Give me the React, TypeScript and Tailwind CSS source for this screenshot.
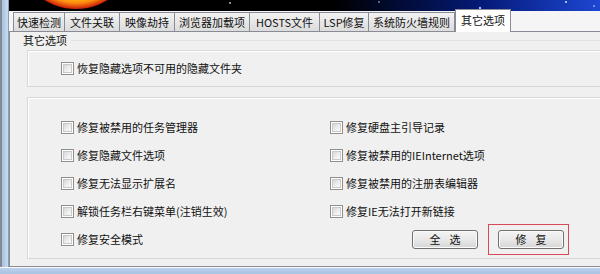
import React from "react";

const tabs: [string, number][] = [
  ["快速检测", 52],
  ["文件关联", 56],
  ["映像劫持", 56],
  ["浏览器加载项", 76],
  ["HOSTS文件", 71],
  ["LSP修复", 50],
  ["系统防火墙规则", 87],
];

function Check() {
  return (
    <span className="flex h-[13px] w-[13px] shrink-0 border border-[#8f8f8f] bg-white p-[1px]">
      <span className="flex-1 border border-[#c9c9c9] bg-gradient-to-br from-[#d6d6d6] via-[#ececec] to-[#fbfbfb]" />
    </span>
  );
}

function Item({ label }: { label: string }) {
  return (
    <div className="flex h-[28px] items-center gap-[3px]">
      <Check />
      <span className="whitespace-nowrap leading-none">{label}</span>
    </div>
  );
}

function Btn({ a, b }: { a: string; b: string }) {
  return (
    <div className="flex h-[19px] w-[66px] items-center justify-center gap-[9px] rounded-[3px] border border-[#707070] bg-gradient-to-b from-[#f4f4f4] via-[#e8e8e8] to-[#d6d6d6] leading-none shadow-[inset_0_0_0_1px_#fbfbfb]">
      <span>{a}</span>
      <span>{b}</span>
    </div>
  );
}

export default function App() {
  return (
    <div className="flex h-[274px] w-[600px] flex-col overflow-hidden bg-[#f0f0f0] font-['Noto_Sans_CJK_SC',sans-serif] text-[11px] text-[#111]">
      <div className="flex h-[267px]">
        {/* window frame left */}
        <div className="flex w-[9px] shrink-0">
          <div className="w-[2px] bg-[#838a95]" />
          <div className="w-[6px] bg-gradient-to-r from-[#a7c1e0] to-[#c8daee]" />
          <div className="w-px bg-[#8a9cb4]" />
        </div>
        <div className="flex min-w-0 flex-1 flex-col">
          {/* banner */}
          <div className="relative h-[11px] shrink-0 overflow-hidden bg-black">
            <svg className="absolute inset-0" width="591" height="11" viewBox="0 0 591 11">
              <defs>
                <radialGradient id="sun" cx="67" cy="-51" r="60" gradientUnits="userSpaceOnUse">
                  <stop offset="0" stopColor="#fffbd0" />
                  <stop offset="0.78" stopColor="#ffd21a" />
                  <stop offset="0.9" stopColor="#ff8a10" />
                  <stop offset="1" stopColor="#c81e08" />
                </radialGradient>
                <linearGradient id="sky" x1="0" y1="0" x2="1" y2="0">
                  <stop offset="0" stopColor="#000000" />
                  <stop offset="0.55" stopColor="#000000" />
                  <stop offset="0.8" stopColor="#041a78" />
                  <stop offset="1" stopColor="#1d46d2" />
                </linearGradient>
              </defs>
              <rect x="0" y="0" width="591" height="11" fill="url(#sky)" />
              <circle cx="67" cy="-51" r="60" fill="url(#sun)" />
              <circle cx="221" cy="3" r="1" fill="#bbbbbb" />
              <circle cx="370" cy="2" r="0.8" fill="#cccccc" />
              <circle cx="471" cy="8" r="1.2" fill="#9fb8ff" />
              <circle cx="557" cy="2" r="1" fill="#dde6ff" />
              <circle cx="585" cy="6" r="0.8" fill="#dde6ff" />
            </svg>
          </div>
          {/* tab strip */}
          <div className="relative z-10 flex h-[20px] shrink-0 items-end bg-[#f5f5f5] pl-[4px]">
            {tabs.map(([t, w]) => (
              <div
                key={t}
                style={{ width: w }}
                className="-mr-px flex h-[19px] items-center justify-center whitespace-nowrap border border-b-0 border-[#898c95] bg-gradient-to-b from-[#f2f2f2] to-[#dcdcdc] leading-none"
              >
                {t}
              </div>
            ))}
            <div className="-mb-px ml-px flex h-[23px] w-[56px] items-center justify-center whitespace-nowrap border border-b-0 border-[#898c95] bg-white pb-[2px] leading-none">
              其它选项
            </div>
          </div>
          {/* panel */}
          <div className="flex h-[236px] flex-col overflow-hidden border-b border-l border-t border-[#898c95] bg-[#f0f0f0] pl-[13px] pt-[1px]">
            <div className="flex h-[14px] items-center gap-[4px]">
              <span className="whitespace-nowrap leading-none">其它选项</span>
              <div className="h-px flex-1 bg-[#e2e2e2]" />
            </div>
            <div className="ml-[4px] mt-[3px] flex h-[37px] w-[600px] shrink-0 items-center border border-[#d5d9dd] pl-[33px] shadow-[inset_1px_1px_0_#ffffff]">
              <Item label="恢复隐藏选项不可用的隐藏文件夹" />
            </div>
            <div className="ml-[4px] mt-[10px] h-[162px] w-[600px] shrink-0 border border-[#d5d9dd] pl-[33px] pt-[15px] shadow-[inset_1px_1px_0_#ffffff]">
              <div className="grid grid-cols-[269px_1fr]">
                <Item label="修复被禁用的任务管理器" />
                <Item label="修复硬盘主引导记录" />
                <Item label="修复隐藏文件选项" />
                <Item label="修复被禁用的IEInternet选项" />
                <Item label="修复无法显示扩展名" />
                <Item label="修复被禁用的注册表编辑器" />
                <Item label="解锁任务栏右键菜单(注销生效)" />
                <Item label="修复IE无法打开新链接" />
                <Item label="修复安全模式" />
                <div className="flex h-[28px] items-center pl-[82px]">
                  <Btn a="全" b="选" />
                  <div className="relative ml-[20px]">
                    <Btn a="修" b="复" />
                    <div className="pointer-events-none absolute -bottom-[6px] -left-[10px] -right-[5px] -top-[6px] border border-[#d84a5a]" />
                  </div>
                </div>
              </div>
            </div>
          </div>
        </div>
      </div>
      <div className="h-px bg-[#fafafa]" />
      <div className="flex-1 bg-gradient-to-b from-[#bcd2ec] to-[#a9c3e3]" />
    </div>
  );
}
